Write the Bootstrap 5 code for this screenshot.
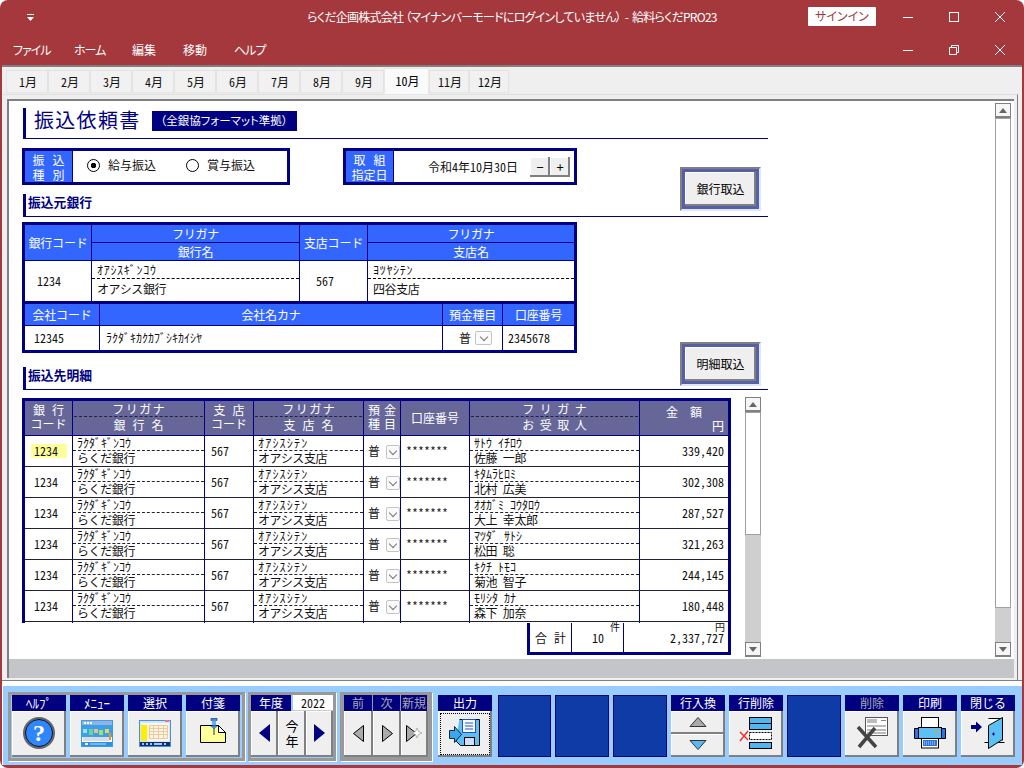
<!DOCTYPE html>
<html lang="ja">
<head>
  <meta charset="UTF-8" />
  <meta name="viewport" content="width=device-width, initial-scale=1.0" />
  <title>給料らくだPRO23 - 振込依頼書</title>
  <link href="https://cdn.jsdelivr.net/npm/bootstrap@5.3.3/dist/css/bootstrap.min.css" rel="stylesheet" />
  <style>
    html, body { height: 768px; overflow: hidden; }
    body {
      background: #fff;
      color: #111;
      font-family: "Noto Sans CJK JP", "Liberation Sans", sans-serif;
      font-size: 12px;
      line-height: 14px;
    }
    .app { height: 768px; background: #a4383c; border-radius: 8px; padding: 0 2px 2px; }

    /* title bar + menu */
    .titlebar { height: 33px; margin: 0 -2px; color: #fff; display: grid; grid-template-columns: 1fr auto 1fr; align-items: center; }
    .titlebar .ttl { font-feature-settings: "palt"; letter-spacing: -.75px; white-space: nowrap; }
    .qat { margin-left: 27px; }
    .signin { width: 68px; height: 19px; background: #fff; color: #a4383c; text-align: center; line-height: 18px; margin-right: 9px; font-feature-settings: "palt"; border-radius: 1px; }
    .wctl { margin-right: 1px; }
    .wbtn { width: 46px; height: 33px; display: flex; align-items: center; justify-content: center; }
    .menubar { height: 32px; margin: 0 -2px; color: #fff; padding-left: 13px; display: grid; grid-template-columns: 61px 58px 51px 51px 60px 1fr; align-items: center; font-feature-settings: "palt"; }
    .menubar .kn { letter-spacing: -1px; }

    /* client */
    .client { height: 616px; background: #efefef; border-top: 2px solid #808080; border-bottom: 1px solid #808080; }
    .nav-tabs.months { border: 0; height: 27px; padding: 3px 0 0 4px; flex-wrap: nowrap; }
    .months .nav-link { width: 42px; height: 23px; padding: 0 0 0 2px; margin: 0; line-height: 22px; text-align: center; color: #111; background: #f1f1f1; border: 1px solid #e3e3e3; border-radius: 0; font-size: 12px; }
    .months .nav-link.active { width: 45px; height: 27px; margin-top: -2px; background: #fafafa; border-color: #e8e8e8; line-height: 24px; }
    .months .w-40 { width: 40px; }
    .tabpage { height: 586px; margin-left: 1px; margin-right: 4px; border-top: 1px solid #ddd; border-right: 1px solid #808080; padding: 4px 3px 0 4px; }
    .sheet { height: 579px; border-top: 2px solid #808080; border-left: 2px solid #808080; background: #c4c5c9; }
    .pane { height: 558px; background: #fff; }
    .form-area { width: 986px; padding: 7px 0 0 13px; }
    .form-inner { width: 746px; }

    /* headings */
    .title-row { height: 31px; margin-left: 1px; border-left: 3px solid #000080; border-bottom: 1px solid #000080; padding-left: 8px; }
    .title-row h1 { margin: 0; font-size: 20px; line-height: 24px; letter-spacing: 1.3px; color: #000080; font-weight: 400; }
    .badge-fmt { margin-left: 11px; width: 145px; height: 20px; background: #000080; color: #fff; line-height: 18px; text-align: center; margin-top: 3px; font-size: 11.5px; font-feature-settings: "palt"; white-space: nowrap; }
    .sec-head { height: 23px; margin-left: 1px; border-left: 3px solid #000080; border-bottom: 1px solid #000080; padding: 0 0 0 2px; font-size: 12.8px; line-height: 16px; font-weight: 700; color: #000080; }
    .sec-2 { margin-top: 14px; }

    /* small boxes */
    .boxes { margin-top: 9px; margin-bottom: 9px; }
    .kbox { height: 37px; border: 3px solid #000080; display: flex; background: #fff; }
    .kbox .lbl { background: #3366ff; color: #fff; border-right: 1px solid #000080; text-align: center; line-height: 15px; padding-top: 1px; width: 48px; }
    .kbox-type { width: 268px; }
    .kbox-date { width: 234px; margin-left: 53px; }
    .lbl .sp { letter-spacing: 8px; margin-right: -8px; }
    .radios { padding-left: 14px; padding-bottom: 3px; }
    .form-check-input.rd { width: 13px; height: 13px; margin: 0; border: 1px solid #000; background-color: #fff; }
    .form-check-input.rd:checked { background-color: #fff; background-image: radial-gradient(circle, #000 2.5px, transparent 3px); border-color: #000; }
    .rd-lbl { margin-left: 8px; }
    .rd-2 { margin-left: 30px !important; }
    .bevel-sm { width: 20px; height: 20px; padding: 0; border: 0; border-radius: 0; background: #efefef; color: #000; font-size: 13px; line-height: 18px; box-shadow: inset -2px -2px 0 #808080, inset 1px 1px 0 #fff; }
    .bevel-sm:hover { background: #efefef; color: #000; }

    .side-btn { float: right; width: 81px; height: 44px; padding: 3px; margin-right: 7px; border: 2px solid; border-color: #808080 #dfe6ff #dfe6ff #808080; background: #5560a8; border-radius: 0; font-size: 12px; }
    .side-btn span { display: block; height: 34px; background: #efefef; line-height: 33px; text-align: center; color: #000; box-shadow: inset -2px -2px 0 #808080, inset 1px 1px 0 #fff; }
    .side-btn:hover { background: #5560a8; }
    .side-btn.first { margin-top: 28px; }
    .side-btn.second { margin-top: 125px; }

    /* bank table */
    .bank { width: 555px; border: 3px solid #000080; background: #000080; margin-top: 5px; }
    .bank-a, .bank-b { display: grid; gap: 1px; }
    .bank-a { grid-template-columns: 66px 207px 67px 206px; grid-template-rows: 17px 17px 40px; }
    .bank-b { grid-template-columns: 74px 342px 59px 71px; grid-template-rows: 21px 24px; margin-top: 3px; }
    .ch { background: #3366ff; color: #fff; display: flex; align-items: center; justify-content: center; letter-spacing: -.2px; }
    .ch2 { grid-row: span 2; }
    .cd { background: #fff; display: flex; flex-direction: column; }
    .kana { height: 18px; padding: 2px 0 0 5px; border-bottom: 1px dashed #000; letter-spacing: .7px; }
    .name { padding: 3px 0 0 5px; letter-spacing: -.4px; }
    .cd-mid { justify-content: center; }
    .num { font-feature-settings: "hwid"; }
    .pl-12 { padding-left: 12px; } .pl-16 { padding-left: 16px; } .pl-9 { padding-left: 9px; } .pl-5 { padding-left: 5px; } .pl-6 { padding-left: 6px; }

    /* dropdown arrow */
    .dd { display: inline-flex; align-items: center; justify-content: center; width: 17px; height: 14px; border: 1px solid #c4c4c4; border-radius: 2px; background: #fafafa; }
    .dd::after { content: ""; width: 6px; height: 6px; margin-top: -3px; border-right: 1px solid #777; border-bottom: 1px solid #777; transform: rotate(45deg); }
    .m-body .dd { margin-left: 6px; margin-top: 2px; }

    /* detail table */
    .detail-wrap { margin-top: 8px; }
    .meisai { width: 709px; height: 225px; overflow: hidden; border: 3px solid #000080; border-bottom: 0; background: #fff; }
    .m-row { display: grid; grid-template-columns: 47px 131px 48px 109px 36px 68px 169px 88px; gap: 1px; background: #000080; }
    .m-head { height: 35px; border-bottom: 1px solid #000080; }
    .m-head > div { background: #666699; color: #fff; text-align: center; }
    .m-body { height: 31px; border-bottom: 1px solid #223; }
    .m-body > div { background: #fff; }
    .dbl { padding-top: 2px; line-height: 14px; }
    .hk { height: 16px; border-bottom: 1px dashed #223; line-height: 15px; margin: 0 1px; }
    .hn { line-height: 16px; }
    .sp2 { letter-spacing: 1.5px; margin-right: -1.5px; }
    .sp3 { letter-spacing: 7px; margin-right: -7px; }
    .sp4 { letter-spacing: 5.5px; margin-right: -5.5px; }
    .sp5 { letter-spacing: 12px; margin-right: -12px; }
    .spy { letter-spacing: 4px; margin-right: -4px; }
    .vc { display: flex; align-items: center; }
    .mk { height: 15px; padding: 0 0 0 4px; border-bottom: 1px dashed #223; line-height: 14px; white-space: nowrap; }
    .mk.wide { letter-spacing: 1.2px; }
    .mn { padding-left: 4px; line-height: 14px; white-space: nowrap; letter-spacing: -.4px; }
    .hl { background: #ffff99; width: 36px; height: 14px; margin-left: 6px; padding-left: 3px; line-height: 14px; display: block; }
    .amt { justify-content: flex-end; padding-right: 4px; }
    .cnt { width: 204px; height: 32px; margin-left: 505px; border: 3px solid #000080; border-top: 0; background: #000080; display: grid; grid-template-columns: 41px 51px 104px; gap: 1px; }
    .cnt > div { background: #fff; }
    .cnt .u { height: 8px; font-size: 10px; line-height: 8px; text-align: right; padding-right: 3px; }
    .cnt .n10 { padding-left: 20px; }

    /* scrollbars */
    .vs { display: flex; flex-direction: column; width: 16px; background: #cfcfcf; }
    .vs-main { height: 554px; margin-top: 2px; margin-left: 0; }
    .vs-sub { height: 260px; margin: -1px 0 0 14px; }
    .vs i { display: flex; align-items: center; justify-content: center; height: 15px; flex: none; background: #f6f6f6; border: 1px solid #808080; border-bottom-width: 2px; }
    .vs b { display: block; flex: none; background: #fff; border: 1px solid #a0a0a0; }
    .vs u { display: block; flex: 1; }
    .th-main { height: 490px; } .th-sub { height: 123px; }
    .tri-u { width: 0; height: 0; border: 4px solid transparent; border-bottom: 5px solid #666; border-top: 0; }
    .tri-d { width: 0; height: 0; border: 4px solid transparent; border-top: 5px solid #666; border-bottom: 0; }

    /* bottom toolbar */
    .toolbar { height: 84px; margin: 0; background: #fff; padding-top: 5px; }
    .tb { height: 79px; background: #99ccff; padding: 6px 0 0 5px; margin: 0 0 0 1px; }
    .grp { height: 69px; border: 3px solid #999; box-shadow: 1px 1px 0 #fff; padding-left: 1px; }
    .grp-1 { width: 237px; gap: 4px; }
    .grp-2 { width: 88px; margin-left: 3px; padding-left: 0; }
    .grp-2 .th { width: 40px; }
    .grp-2 .tbtn { width: 27.300px; }
    .grp-3 { width: 92px; margin-left: 4px; display: grid; grid-template-columns: 29px 28px 27px; grid-template-rows: 16px 46px; background: #999; }
    .ti { width: 54px; }
    .th { display: block; height: 16px; background: #000080; color: #fff; text-align: center; line-height: 16px; }
    .th.off { color: #a9a9a9; }
    .th.hw { font-size: 13px; }
    .tbtn { display: flex; align-items: center; justify-content: center; width: 100%; height: 46px; padding: 0 0 2px; border: 0; border-radius: 0; background: #efefef; box-shadow: inset -2px -2px 0 #808080, inset 1px 1px 0 #fff; color: #000; }
    .tbtn:hover { background: #efefef; }
    .tbtn.focus { outline: 1px dotted #000; outline-offset: -3px; }
    .grp-3 .th { margin-right: 1px; }
    .yr { width: 40px; height: 16px; margin-left: 2px; background: #fff; text-align: center; line-height: 15px; border-bottom: 1px solid #ccc; }
    .rest { margin-left: 2px; gap: 4px; padding-top: 3px; }
    .blank { width: 54px; height: 62px; background: #0f3ba6; border: 1px solid #000080; }
    .blank.n { width: 53px; margin-left: 2px; }
    .half { height: 23px; }
    .konen { line-height: 15px; font-size: 13px; }
    .ic-note { margin-bottom: 4px; }
  </style>
</head>
<body>
<div class="app d-flex flex-column">

  <div class="titlebar">
    <div class="qat">
      <svg width="8" height="8" viewBox="0 0 8 8"><rect y="0" width="7" height="1" fill="#fff"/><path d="M0 3h7L3.5 7z" fill="#fff"/></svg>
    </div>
    <div class="ttl">らくだ企画株式会社 （マイナンバーモードにログインしていません） &nbsp;-&nbsp; 給料らくだPRO23</div>
    <div class="d-flex justify-content-end align-items-center wctl">
      <div class="signin">サインイン</div>
      <div class="wbtn"><svg width="10" height="10"><path d="M0 5.5h10" stroke="#fff"/></svg></div>
      <div class="wbtn"><svg width="10" height="10"><rect x=".5" y=".5" width="9" height="9" fill="none" stroke="#fff"/></svg></div>
      <div class="wbtn"><svg width="10" height="10"><path d="M0 0l10 10M10 0L0 10" stroke="#fff"/></svg></div>
    </div>
  </div>

  <div class="menubar">
    <span class="kn">ファイル</span><span class="kn">ホーム</span><span>編集</span><span>移動</span><span class="kn">ヘルプ</span>
    <div class="ms-auto d-flex wctl">
      <div class="wbtn"><svg width="10" height="10"><path d="M0 5.5h10" stroke="#fff"/></svg></div>
      <div class="wbtn"><svg width="10" height="10"><path d="M.5 2.5h7v7h-7zM2.5 2.5v-2h7v7h-2" fill="none" stroke="#fff"/></svg></div>
      <div class="wbtn"><svg width="10" height="10"><path d="M0 0l10 10M10 0L0 10" stroke="#fff"/></svg></div>
    </div>
  </div>

  <div class="client">
    <ul class="nav nav-tabs months num">
      <li class="nav-item"><a class="nav-link" href="#">1月</a></li>
      <li class="nav-item"><a class="nav-link" href="#">2月</a></li>
      <li class="nav-item"><a class="nav-link" href="#">3月</a></li>
      <li class="nav-item"><a class="nav-link" href="#">4月</a></li>
      <li class="nav-item"><a class="nav-link" href="#">5月</a></li>
      <li class="nav-item"><a class="nav-link" href="#">6月</a></li>
      <li class="nav-item"><a class="nav-link" href="#">7月</a></li>
      <li class="nav-item"><a class="nav-link" href="#">8月</a></li>
      <li class="nav-item"><a class="nav-link" href="#">9月</a></li>
      <li class="nav-item"><a class="nav-link active" href="#">10月</a></li>
      <li class="nav-item"><a class="nav-link w-40" href="#">11月</a></li>
      <li class="nav-item"><a class="nav-link w-40" href="#">12月</a></li>
    </ul>
    <div class="tabpage">
      <div class="sheet">
        <div class="pane d-flex">
          <div class="form-area">
          <div class="form-inner">

            <div class="title-row d-flex align-items-start">
              <h1>振込依頼書</h1>
              <div class="badge-fmt">（全銀協フォーマット準拠）</div>
            </div>

            <button class="btn side-btn first"><span>銀行取込</span></button>
            <div class="boxes d-flex">
              <div class="kbox kbox-type">
                <div class="lbl"><span class="sp">振込</span><br><span class="sp">種別</span></div>
                <div class="d-flex align-items-center radios">
                  <input class="form-check-input rd" type="radio" name="kind" checked>
                  <span class="rd-lbl">給与振込</span>
                  <input class="form-check-input rd rd-2" type="radio" name="kind">
                  <span class="rd-lbl">賞与振込</span>
                </div>
              </div>
              <div class="kbox kbox-date">
                <div class="lbl"><span class="sp">取組</span><br>指定日</div>
                <div class="flex-grow-1 d-flex align-items-center justify-content-end">
                  <span class="me-2 pe-1 num">令和4年10月30日</span>
                  <button class="btn bevel-sm">−</button><button class="btn bevel-sm">+</button>
                  <span class="ms-1"></span>
                </div>
              </div>
            </div>

            <div class="sec-head">振込元銀行</div>

            <button class="btn side-btn second"><span>明細取込</span></button>
            <div class="bank">
              <div class="bank-a">
                <div class="ch ch2">銀行コード</div>
                <div class="ch">フリガナ</div>
                <div class="ch ch2">支店コード</div>
                <div class="ch">フリガナ</div>
                <div class="ch">銀行名</div>
                <div class="ch">支店名</div>
                <div class="cd cd-mid pl-12 num">1234</div>
                <div class="cd"><div class="kana">ｵｱｼｽｷﾞﾝｺｳ</div><div class="name">オアシス銀行</div></div>
                <div class="cd cd-mid pl-16 num">567</div>
                <div class="cd"><div class="kana">ﾖﾂﾔｼﾃﾝ</div><div class="name">四谷支店</div></div>
              </div>
              <div class="bank-b">
                <div class="ch">会社コード</div>
                <div class="ch">会社名カナ</div>
                <div class="ch">預金種目</div>
                <div class="ch">口座番号</div>
                <div class="cd cd-mid pl-9 num">12345</div>
                <div class="cd cd-mid pl-6">ﾗｸﾀﾞｷｶｸｶﾌﾞｼｷｶｲｼﾔ</div>
                <div class="cd cd-mid"><div class="d-flex align-items-center gap-1 ps-3">普<span class="dd"></span></div></div>
                <div class="cd cd-mid pl-5 num">2345678</div>
              </div>
            </div>

            <div class="sec-head sec-2">振込先明細</div>

            <div class="detail-wrap d-flex">
              <div>
                <div class="meisai">
                  <div class="m-row m-head">
                    <div class="dbl"><span class="sp3">銀行</span><br>コード</div>
                    <div><div class="hk"><span class="sp2">フリガナ</span></div><div class="hn"><span class="sp3">銀行名</span></div></div>
                    <div class="dbl"><span class="sp3">支店</span><br>コード</div>
                    <div><div class="hk"><span class="sp2">フリガナ</span></div><div class="hn"><span class="sp3">支店名</span></div></div>
                    <div class="dbl"><span class="spy">預金</span><br><span class="spy">種目</span></div>
                    <div class="vc justify-content-center">口座番号</div>
                    <div><div class="hk"><span class="sp4">フリガナ</span></div><div class="hn"><span class="sp4">お受取人</span></div></div>
                    <div><div class="pt-1"><span class="sp5">金額</span></div><div class="text-end pe-1">円</div></div>
                  </div>

                  <div class="m-row m-body">
                    <div class="vc"><span class="hl num">1234</span></div>
                    <div><div class="mk">ﾗｸﾀﾞｷﾞﾝｺｳ</div><div class="mn">らくだ銀行</div></div>
                    <div class="vc pl-6 num">567</div>
                    <div><div class="mk wide">ｵｱｼｽｼﾃﾝ</div><div class="mn">オアシス支店</div></div>
                    <div class="vc ps-1">普<span class="dd"></span></div>
                    <div class="vc pl-5 num">*******</div>
                    <div><div class="mk">ｻﾄｳ&ensp;ｲﾁﾛｳ</div><div class="mn">佐藤&ensp;一郎</div></div>
                    <div class="vc amt num">339,420</div>
                  </div>
                  <div class="m-row m-body">
                    <div class="vc pl-9 num">1234</div>
                    <div><div class="mk">ﾗｸﾀﾞｷﾞﾝｺｳ</div><div class="mn">らくだ銀行</div></div>
                    <div class="vc pl-6 num">567</div>
                    <div><div class="mk wide">ｵｱｼｽｼﾃﾝ</div><div class="mn">オアシス支店</div></div>
                    <div class="vc ps-1">普<span class="dd"></span></div>
                    <div class="vc pl-5 num">*******</div>
                    <div><div class="mk">ｷﾀﾑﾗﾋﾛﾐ</div><div class="mn">北村&ensp;広美</div></div>
                    <div class="vc amt num">302,308</div>
                  </div>
                  <div class="m-row m-body">
                    <div class="vc pl-9 num">1234</div>
                    <div><div class="mk">ﾗｸﾀﾞｷﾞﾝｺｳ</div><div class="mn">らくだ銀行</div></div>
                    <div class="vc pl-6 num">567</div>
                    <div><div class="mk wide">ｵｱｼｽｼﾃﾝ</div><div class="mn">オアシス支店</div></div>
                    <div class="vc ps-1">普<span class="dd"></span></div>
                    <div class="vc pl-5 num">*******</div>
                    <div><div class="mk">ｵｵｶﾞﾐ&ensp;ｺｳﾀﾛｳ</div><div class="mn">大上&ensp;幸太郎</div></div>
                    <div class="vc amt num">287,527</div>
                  </div>
                  <div class="m-row m-body">
                    <div class="vc pl-9 num">1234</div>
                    <div><div class="mk">ﾗｸﾀﾞｷﾞﾝｺｳ</div><div class="mn">らくだ銀行</div></div>
                    <div class="vc pl-6 num">567</div>
                    <div><div class="mk wide">ｵｱｼｽｼﾃﾝ</div><div class="mn">オアシス支店</div></div>
                    <div class="vc ps-1">普<span class="dd"></span></div>
                    <div class="vc pl-5 num">*******</div>
                    <div><div class="mk">ﾏﾂﾀﾞ&ensp;ｻﾄｼ</div><div class="mn">松田&ensp;聡</div></div>
                    <div class="vc amt num">321,263</div>
                  </div>
                  <div class="m-row m-body">
                    <div class="vc pl-9 num">1234</div>
                    <div><div class="mk">ﾗｸﾀﾞｷﾞﾝｺｳ</div><div class="mn">らくだ銀行</div></div>
                    <div class="vc pl-6 num">567</div>
                    <div><div class="mk wide">ｵｱｼｽｼﾃﾝ</div><div class="mn">オアシス支店</div></div>
                    <div class="vc ps-1">普<span class="dd"></span></div>
                    <div class="vc pl-5 num">*******</div>
                    <div><div class="mk">ｷｸﾁ&ensp;ﾄﾓｺ</div><div class="mn">菊池&ensp;智子</div></div>
                    <div class="vc amt num">244,145</div>
                  </div>
                  <div class="m-row m-body">
                    <div class="vc pl-9 num">1234</div>
                    <div><div class="mk">ﾗｸﾀﾞｷﾞﾝｺｳ</div><div class="mn">らくだ銀行</div></div>
                    <div class="vc pl-6 num">567</div>
                    <div><div class="mk wide">ｵｱｼｽｼﾃﾝ</div><div class="mn">オアシス支店</div></div>
                    <div class="vc ps-1">普<span class="dd"></span></div>
                    <div class="vc pl-5 num">*******</div>
                    <div><div class="mk">ﾓﾘｼﾀ&ensp;ｶﾅ</div><div class="mn">森下&ensp;加奈</div></div>
                    <div class="vc amt num">180,448</div>
                  </div>
                  <div class="m-row m-body">
                    <div></div><div></div><div></div><div></div><div></div><div></div><div></div><div></div>
                  </div>
                </div>
                <div class="cnt">
                  <div class="vc justify-content-center"><span class="sp3">合計</span></div>
                  <div><div class="u">件</div><div class="num n10">10</div></div>
                  <div><div class="u">円</div><div class="text-end pe-1 num">2,337,727</div></div>
                </div>
              </div>
              <div class="vs vs-sub"><i><span class="tri-u"></span></i><b class="th-sub"></b><u></u><i><span class="tri-d"></span></i></div>
            </div>

          </div>
          </div>
          <div class="vs vs-main"><i><span class="tri-u"></span></i><b class="th-main"></b><u></u><i><span class="tri-d"></span></i></div>
        </div>
      </div>
    </div>
  </div>

  <div class="toolbar">
    <div class="tb d-flex align-items-start">

      <div class="grp grp-1 d-flex">
        <div class="ti"><span class="th hw">ﾍﾙﾌﾟ</span><button class="btn tbtn">
          <svg width="32" height="32" viewBox="0 0 32 32"><circle cx="16" cy="16" r="15" fill="#2f86ff" stroke="#666" stroke-width="2"/><circle cx="16" cy="16" r="13.5" fill="none" stroke="#111"/><text x="16" y="24" text-anchor="middle" font-family="Liberation Serif, serif" font-weight="700" font-size="24" fill="#fff">?</text></svg>
        </button></div>
        <div class="ti"><span class="th hw">ﾒﾆｭｰ</span><button class="btn tbtn">
          <svg width="32" height="27" viewBox="0 0 32 27"><rect x=".5" y=".5" width="31" height="26" fill="#fff" stroke="#3a9cf0"/><rect x="1" y="1" width="30" height="4" fill="#8fb4e0"/><path d="M3 2h2v2H3zM6 2h2v2H6zM9 2h2v2H9z" fill="#fff"/><rect x="1" y="5" width="30" height="12" fill="#3aa0e8"/><rect x="2" y="9" width="4" height="4" fill="#9de0f0"/><rect x="8" y="9" width="4" height="6" fill="#6fd0a0"/><rect x="13" y="9" width="4" height="4" fill="#e8c090"/><rect x="18" y="10" width="4" height="5" fill="#a0e070"/><rect x="24" y="9" width="4" height="4" fill="#f0d060"/><rect x="28" y="13" width="2" height="7" fill="#f09020"/><rect x="2" y="17" width="26" height="4" fill="#d8dce8"/><rect x="1" y="22" width="30" height="4" fill="#2f8fe0"/><rect x="4" y="23" width="3" height="2" fill="#fff"/><rect x="9" y="23.500" width="16" height="1" fill="#aee4ff"/></svg>
        </button></div>
        <div class="ti"><span class="th">選択</span><button class="btn tbtn">
          <svg width="32" height="27" viewBox="0 0 32 27"><rect x=".5" y=".5" width="31" height="26" fill="#cfe6ff" stroke="#4a90d8"/><rect x="26" y="0" width="4" height="2" fill="#f070a0"/><rect x="2" y="3" width="28" height="18" fill="#fdf5e6"/><rect x="2" y="5" width="6" height="16" fill="#ffee00"/><path d="M10.500 5.500h18v13h-18zM10.500 8.500h18M10.500 11.500h18M10.500 14.500h18M14.500 5.500v13M19.500 5.500v13M24.500 5.500v13" fill="none" stroke="#edc898"/><rect x="1" y="22" width="30" height="4" fill="#103070"/><path d="M3 23h2v2H3zM7 23h2v2H7zM11 23h2v2h-2zM15 23h8v2h-8zM25 23h2v2h-2z" fill="#9fc8ff"/></svg>
        </button></div>
        <div class="ti"><span class="th">付箋</span><button class="btn tbtn">
          <svg class="ic-note" width="28" height="26" viewBox="0 0 28 26"><path d="M1.500 7.500h18l7 7v10h-25z" fill="#ffff99" stroke="#000"/><path d="M19.500 7.500v7h7z" fill="#fff" stroke="#000"/><rect x="12" y="0.500" width="6" height="2" fill="#3b8ddc" stroke="#103070" stroke-width=".6"/><rect x="13" y="2.500" width="4" height="5" fill="#5fb4f0"/><path d="M11 8h8l-4 3z" fill="#3b8ddc"/><path d="M15 10v7" stroke="#333"/></svg>
        </button></div>
      </div>

      <div class="grp grp-2 d-flex flex-column">
        <div class="d-flex"><span class="th">年度</span><span class="yr num">2022</span></div>
        <div class="d-flex">
          <button class="btn tbtn"><svg width="11" height="18"><path d="M11 0v18L0 9z" fill="#000080"/></svg></button>
          <button class="btn tbtn konen">今<br>年</button>
          <button class="btn tbtn"><svg width="11" height="18"><path d="M0 0v18l11-9z" fill="#000080"/></svg></button>
        </div>
      </div>

      <div class="grp grp-3">
        <span class="th off">前</span><span class="th off">次</span><span class="th off">新規</span>
        <button class="btn tbtn"><svg width="11" height="17"><path d="M10.500 .5v16L.5 8.500z" fill="#aaa" stroke="#000"/></svg></button>
        <button class="btn tbtn"><svg width="11" height="17"><path d="M.5 .5v16l10-8z" fill="#aaa" stroke="#000"/></svg></button>
        <button class="btn tbtn"><svg width="17" height="17"><path d="M.5 .5v16l10-8z" fill="#aaa" stroke="#000"/><path d="M11 3l1.500 3.500L16 8l-3.500 1.500L11 13 9.500 9.500 6 8l3.500-1.500z" fill="#fff" stroke="#999" stroke-width=".7"/></svg></button>
      </div>

      <div class="rest d-flex">
        <div class="ti ms-1"><span class="th">出力</span><button class="btn tbtn focus">
          <svg width="32" height="28" viewBox="0 0 32 28"><path d="M10.500 .5h20v26h-19l-4-4V16" fill="#5cc0f5" stroke="#000"/><rect x="13.500" y=".5" width="13" height="13" fill="#f8fbff" stroke="#2050d0"/><path d="M16 4h8M16 7h8M16 10h8" stroke="#2050d0"/><rect x="15.500" y="18.500" width="10" height="8" fill="#cfe0ff" stroke="#000"/><path d="M.5 7.500h5v-4l7 8-7 8v-4h-5z" transform="translate(0 4)" fill="#3aa8f0" stroke="#000" stroke-width=".8"/></svg>
        </button></div>
        <div class="blank n"></div>
        <div class="blank"></div>
        <div class="blank"></div>
        <div class="ti"><span class="th">行入換</span>
          <button class="btn tbtn half"><svg width="18" height="10"><path d="M9 .5l8 9H1z" fill="#aaa" stroke="#333"/></svg></button>
          <button class="btn tbtn half"><svg width="18" height="10"><path d="M1 .5h16l-8 9z" fill="#5cb8f5" stroke="#333"/></svg></button>
        </div>
        <div class="ti"><span class="th">行削除</span><button class="btn tbtn">
          <svg width="34" height="32" viewBox="0 0 34 32"><rect x="10.500" y=".5" width="22" height="6" fill="#4fb6f0" stroke="#000"/><rect x="10.500" y="6.500" width="22" height="6" fill="#4fb6f0" stroke="#000"/><rect x="10.500" y="15.500" width="22" height="7" fill="#fff" stroke="#000" stroke-dasharray="2 1"/><rect x="10.500" y="25.500" width="22" height="6" fill="#4fb6f0" stroke="#000"/><path d="M1 15l8 8M9 14l-8 10" stroke="#f03030" stroke-width="1.500"/></svg>
        </button></div>
        <div class="blank"></div>
        <div class="ti"><span class="th off">削除</span><button class="btn tbtn">
          <svg width="34" height="32" viewBox="0 0 34 32"><rect x="10.500" y=".5" width="22" height="18" fill="#fff" stroke="#555"/><rect x="12" y="2" width="10" height="4" fill="#bbb"/><rect x="26" y="3" width="5" height="1" fill="#888"/><path d="M12 8h19v2H12zM12 12h19v2H12zM12 15h19v2H12z" fill="#bbb"/><path d="M3 10l18 20M20 11L4 30" stroke="#444" stroke-width="3.500"/></svg>
        </button></div>
        <div class="ti"><span class="th">印刷</span><button class="btn tbtn">
          <svg width="32" height="32" viewBox="0 0 32 32"><rect x="7.500" y=".5" width="17" height="11" fill="#fff" stroke="#000"/><path d="M.5 11.500h31v10h-31z" fill="#2f6fe8" stroke="#000"/><rect x="4.500" y="10.500" width="23" height="11" fill="#5cc0f5" stroke="#000"/><rect x="20" y="14" width="4" height="1.500" fill="#f0a020"/><rect x="7.500" y="21.500" width="17" height="9.500" fill="#fff" stroke="#000"/><path d="M9 23h14v6H9z" fill="#2f6fe8"/><path d="M10 25h12M10 27h12" stroke="#cfe0ff" stroke-dasharray="1 1"/></svg>
        </button></div>
        <div class="ti"><span class="th">閉じる</span><button class="btn tbtn">
          <svg width="34" height="32" viewBox="0 0 34 32"><path d="M17.500 1.500h14v22" fill="#fff" stroke="#000"/><path d="M13.500 25.500h20" stroke="#000" fill="none"/><path d="M17.500 8.500l14-8v22l-14 9z" fill="#5cc0f5" stroke="#000"/><path d="M21 17h3M22.500 15.500v3" stroke="#000080"/><path d="M0 8h5V4.500l6 5.500-6 5.500V12H0z" fill="#000080"/></svg>
        </button></div>
      </div>

    </div>
  </div>

</div>
<script src="https://cdn.jsdelivr.net/npm/bootstrap@5.3.3/dist/js/bootstrap.bundle.min.js"></script>
</body>
</html>
